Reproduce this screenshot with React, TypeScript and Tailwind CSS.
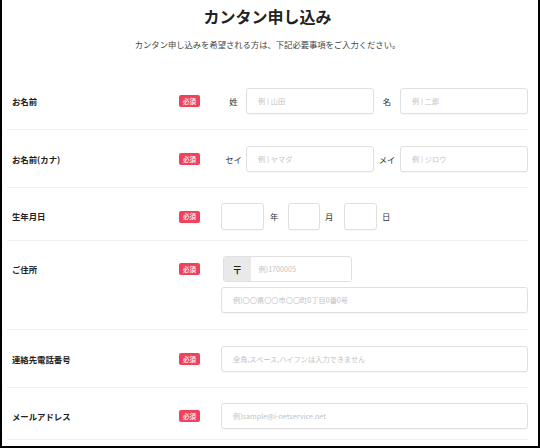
import React from "react";

const font = { fontFamily: '"Noto Sans CJK JP", "Noto Sans", sans-serif' };

function Badge() {
  return (
    <span className="flex h-[12px] w-[21px] items-center justify-center rounded-[2px] bg-[#f0435b] text-[6.5px] font-medium leading-none text-white">
      必須
    </span>
  );
}

function Label({ text, h = "h-[26px]" }: { text: string; h?: string }) {
  return (
    <div className={`flex w-[214px] shrink-0 items-center ${h}`}>
      <div className="w-[172px] pl-[5px] text-[8.4px] font-bold text-[#222]">{text}</div>
      <Badge />
    </div>
  );
}

const inputCls =
  "h-[26px] rounded-[3px] border border-[#e0e0e0] bg-white px-[11px] text-[7.2px] text-[#333] outline-none shadow-[0_1px_1px_rgba(0,0,0,0.03)] placeholder:text-[#c2c2c2]";

export default function App() {
  return (
    <div
      style={font}
      className="h-[448px] w-[540px] overflow-hidden border-x-2 border-b-2 border-black bg-white"
    >
      <div className="ml-[5px] mr-[10px]">
        <div className="flex h-[32px] items-center justify-center text-[16px] font-bold text-[#222]">
          カンタン申し込み
        </div>
        <div className="flex h-[24px] items-center justify-center text-[8.3px] text-[#444]">
          カンタン申し込みを希望される方は、下記必要事項をご入力ください。
        </div>
        <div className="h-[16px]" />

        {/* Row 1 */}
        <div className="flex border-b border-[#f0f0f0] pt-[16px] pb-[15px]">
          <Label text="お名前" />
          <div className="flex items-center">
            <span className="w-[25px] text-center text-[8.4px] text-[#333]">姓</span>
            <input className={`${inputCls} w-[128px]`} placeholder="例 ) 山田" />
            <span className="w-[26px] text-center text-[8.4px] text-[#333]">名</span>
            <input className={`${inputCls} w-[128px]`} placeholder="例 ) 二郎" />
          </div>
        </div>

        {/* Row 2 */}
        <div className="flex border-b border-[#f0f0f0] pt-[16px] pb-[15px]">
          <Label text="お名前(カナ)" />
          <div className="flex items-center">
            <span className="w-[25px] text-center text-[8.4px] text-[#333]">セイ</span>
            <input className={`${inputCls} w-[128px]`} placeholder="例 ) ヤマダ" />
            <span className="w-[26px] text-center text-[8.4px] text-[#333]">メイ</span>
            <input className={`${inputCls} w-[128px]`} placeholder="例 ) ジロウ" />
          </div>
        </div>

        {/* Row 3 */}
        <div className="flex border-b border-[#f0f0f0] pt-[15px] pb-[10px]">
          <Label text="生年月日" h="h-[27px]" />
          <div className="flex items-center text-[8.4px] text-[#333]">
            <input className={`${inputCls} h-[27px] w-[43px]`} />
            <span className="ml-[6px] w-[8px]">年</span>
            <input className={`${inputCls} ml-[10px] h-[27px] w-[32px]`} />
            <span className="ml-[5px] w-[8px]">月</span>
            <input className={`${inputCls} ml-[11px] h-[27px] w-[33px]`} />
            <span className="ml-[5px] w-[8px]">日</span>
          </div>
        </div>

        {/* Row 4 */}
        <div className="flex border-b border-[#f0f0f0] pt-[15px] pb-[16px]">
          <Label text="ご住所" />
          <div className="flex flex-col gap-[5px]">
            <div className="ml-[2px] flex h-[26px] w-[129px] overflow-hidden rounded-[3px] border border-[#e0e0e0]">
              <span className="flex w-[27px] items-center justify-center bg-[#e9e9e9] text-[10px] font-bold text-[#222]">
                〒
              </span>
              <input
                className="w-[102px] bg-white px-[8px] text-[7.2px] outline-none placeholder:text-[#c2c2c2]"
                placeholder="例)1700005"
              />
            </div>
            <input className={`${inputCls} w-[307px]`} placeholder="例)〇〇県〇〇市〇〇町0丁目0番0号" />
          </div>
        </div>

        {/* Row 5 */}
        <div className="flex border-b border-[#f0f0f0] pt-[16px] pb-[15px]">
          <Label text="連絡先電話番号" />
          <input className={`${inputCls} w-[307px]`} placeholder="全角,スペース,ハイフンは入力できません" />
        </div>

        {/* Row 6 */}
        <div className="flex border-b border-[#f0f0f0] pt-[15px] pb-[10px]">
          <Label text="メールアドレス" />
          <input className={`${inputCls} w-[307px]`} placeholder="例)sample@i-netservice.net" />
        </div>
      </div>
    </div>
  );
}
